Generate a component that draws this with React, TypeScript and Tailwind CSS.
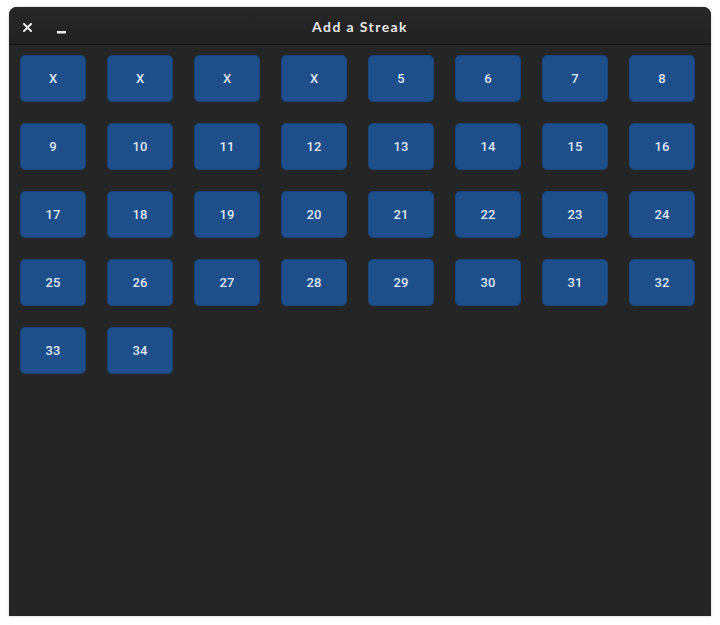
const labels = [
  "X", "X", "X", "X",
  ...Array.from({ length: 30 }, (_, i) => String(i + 5)),
];

const StreakButton = ({ label }: { label: string }) => {
  return (
    <button className="h-[47px] w-[66px] rounded-[5px] border border-[#1a4479] bg-[#1f4f8b] text-[13px] font-medium text-[#dde6f2] [font-family:Roboto,sans-serif]">
      {label}
    </button>
  );
};

export default function App() {
  return (
    <div className="h-[625px] w-[720px] bg-white pl-[9px] pt-[7px]">
      <div className="flex h-[609px] w-[702px] flex-col overflow-hidden rounded-t-[8px] bg-[#252525] shadow-[0_0_2px_rgba(0,0,0,0.3)]">
        <div className="relative flex h-[38px] shrink-0 items-center justify-center border-b border-[#111111] bg-gradient-to-b from-[#272727] to-[#222222]">
          <div className="absolute left-[14px] top-[14px] flex items-center gap-[25px]">
            <svg width="9" height="9" viewBox="0 0 9 9">
              <path
                d="M1 1 L8 8 M8 1 L1 8"
                stroke="#eeeeee"
                strokeWidth="2"
                strokeLinecap="round"
              />
            </svg>
            <svg width="9" height="9" viewBox="0 0 9 9" className="mt-[4px]">
              <rect x="0" y="6" width="9" height="2.5" fill="#eeeeee" />
            </svg>
          </div>
          <span className="mt-[1px] text-[14px] font-bold tracking-[1.4px] text-[#e8e8e8] [font-family:Lato,sans-serif]">
            Add a Streak
          </span>
        </div>
        <div className="flex-1 pl-[11px] pt-[10px]">
          <div className="grid grid-cols-[repeat(8,66px)] gap-x-[21px] gap-y-[21px]">
            {labels.map((l, i) => (
              <StreakButton key={i} label={l} />
            ))}
          </div>
        </div>
      </div>
    </div>
  );
}
